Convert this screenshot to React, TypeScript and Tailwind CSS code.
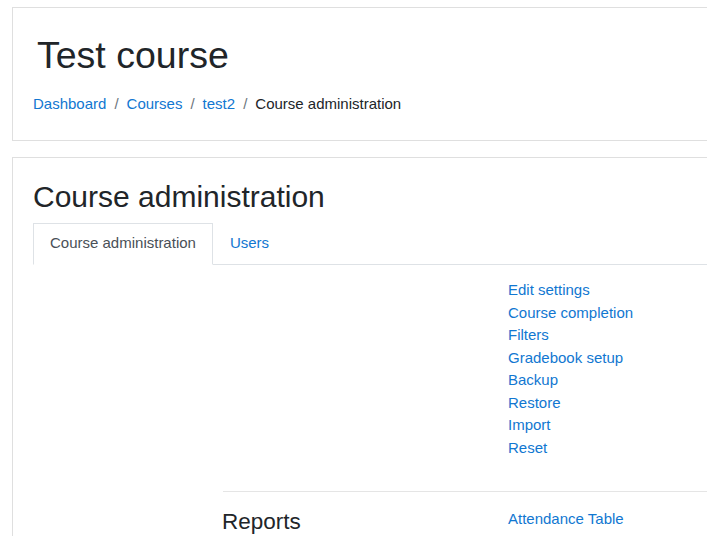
import React from "react";

const links = [
  "Edit settings",
  "Course completion",
  "Filters",
  "Gradebook setup",
  "Backup",
  "Restore",
  "Import",
  "Reset",
];

export default function App() {
  const font = { fontFamily: '"Liberation Sans", Arial, sans-serif' };
  return (
    <div
      className="w-[707px] h-[536px] overflow-hidden bg-white text-[#212529]"
      style={font}
    >
      <div className="pt-[7px] pl-[12px] w-[1100px]">
        {/* Header card */}
        <div className="h-[134px] border border-[#dfdfdf] pl-[20px] pt-[25px]">
          <h1 className="text-[37.5px] leading-[45px] ml-[4px] font-normal">
            Test course
          </h1>
          <nav className="mt-[15px] text-[15px] leading-[22.5px] flex">
            <a className="text-[#1177d1]" href="#">Dashboard</a>
            <span className="pl-2 pr-2 text-[#6c757d]">/</span>
            <a className="text-[#1177d1]" href="#">Courses</a>
            <span className="pl-2 pr-2 text-[#6c757d]">/</span>
            <a className="text-[#1177d1]" href="#">test2</a>
            <span className="pl-2 pr-2 text-[#6c757d]">/</span>
            <span>Course administration</span>
          </nav>
        </div>

        {/* Main card */}
        <div className="mt-[16px] h-[600px] border border-[#dfdfdf] pl-[20px] pt-[21px]">
          <h2 className="text-[30px] leading-[36px] font-normal">
            Course administration
          </h2>
          <div className="mt-[8px] flex border-b border-[#dee2e6] text-[15px] leading-[22.5px]">
            <div className="-mb-px border border-[#dee2e6] border-b-white bg-white px-4 py-2 text-[#495057]">
              Course administration
            </div>
            <a className="px-4 py-2 border border-transparent text-[#1177d1]" href="#">
              Users
            </a>
          </div>
          <div className="mt-[14.5px] ml-[189px] text-[15px] leading-[22.5px]">
            <div className="grid grid-cols-[286px_1fr]">
              <div></div>
              <ul className="mb-4">
                {links.map((l) => (
                  <li key={l}>
                    <a className="text-[#1177d1]" href="#">{l}</a>
                  </li>
                ))}
              </ul>
            </div>
            <hr className="my-4 border-t border-[#e5e5e5] ml-[1px]" />
            <div className="grid grid-cols-[286px_1fr]">
              <h3 className="text-[22.5px] leading-[27px] font-normal">Reports</h3>
              <ul>
                <li>
                  <a className="text-[#1177d1]" href="#">Attendance Table</a>
                </li>
              </ul>
            </div>
          </div>
        </div>
      </div>
    </div>
  );
}
